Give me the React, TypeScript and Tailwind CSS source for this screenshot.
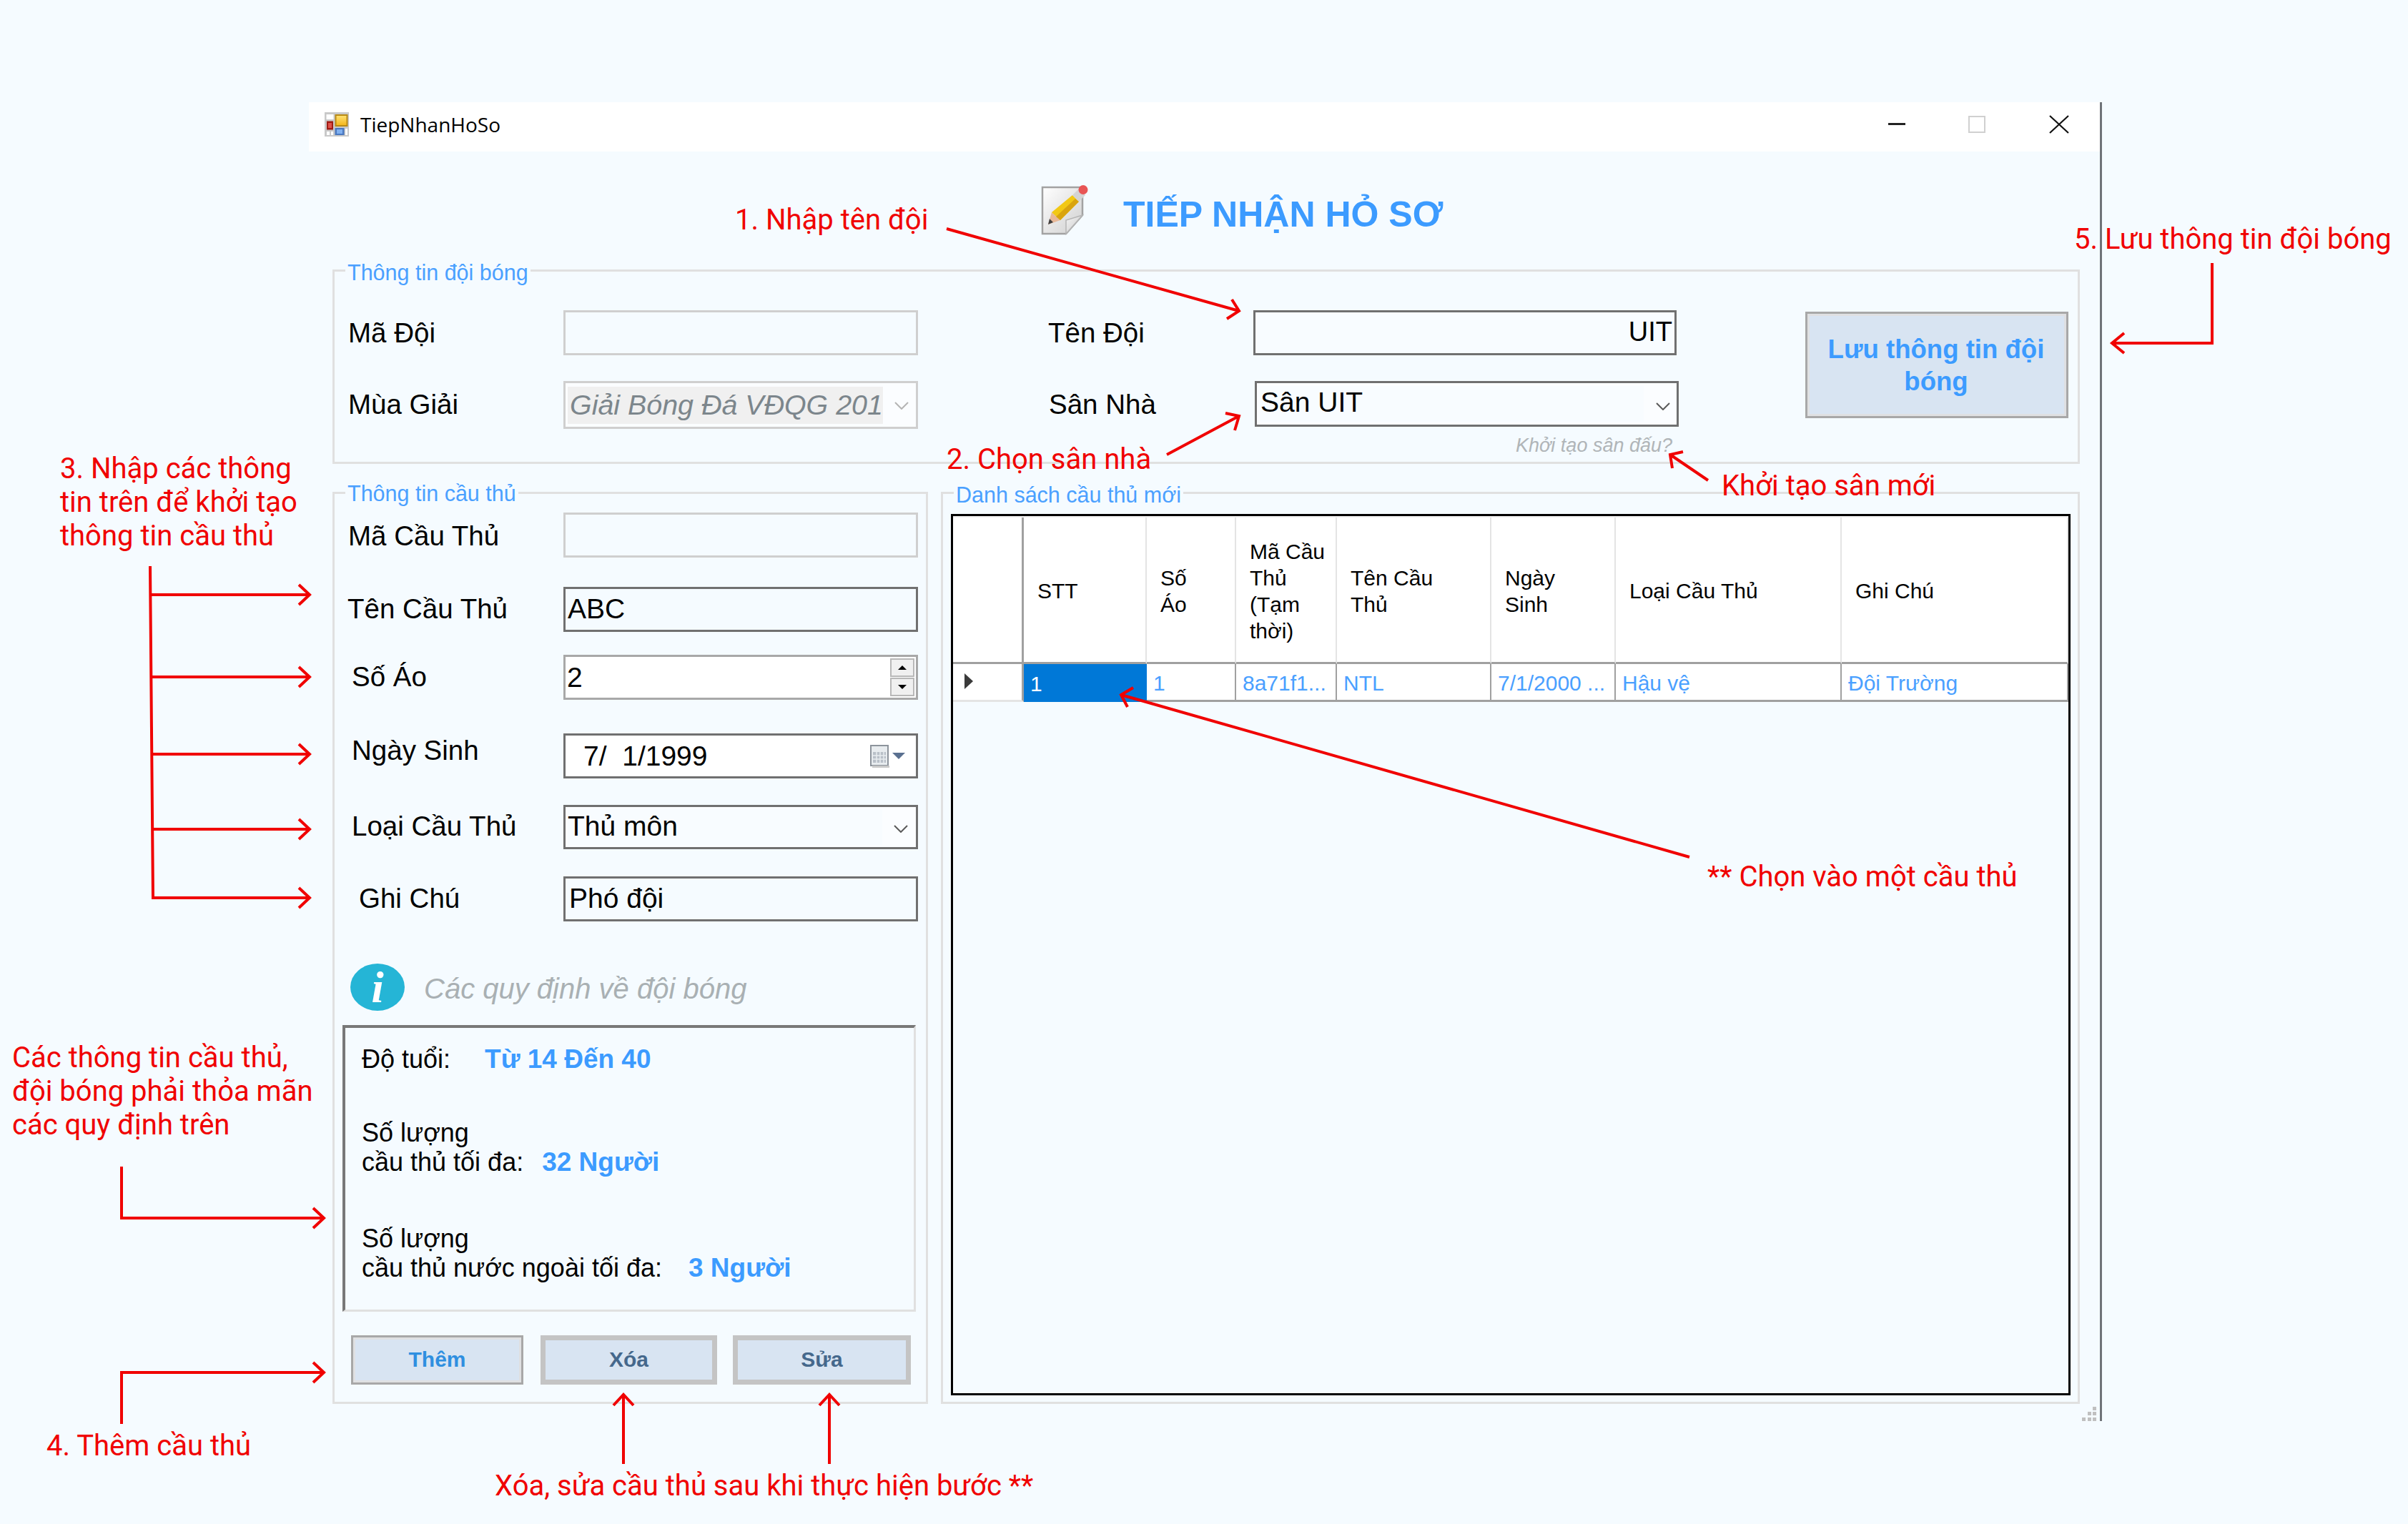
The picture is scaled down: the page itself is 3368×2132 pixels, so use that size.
import React from "react";

const BLUE = "text-[#3c9bff]";

const Chevron = ({ color = "#5a5a5a" }: { color?: string }) => (
	<svg width="20" height="11" viewBox="0 0 20 11" fill="none">
		<path d="M1 1L10 10L19 1" stroke={color} strokeWidth="2" />
	</svg>
);

const WindowIcon = () => (
	<svg width="34" height="34" viewBox="0 0 34 34" className="shrink-0">
		<defs>
			<linearGradient id="yel" x1="0" y1="0" x2="0" y2="1">
				<stop offset="0" stopColor="#ffe070" />
				<stop offset="1" stopColor="#f5b81e" />
			</linearGradient>
		</defs>
		<rect width="34" height="34" fill="#c9c9c9" />
		<rect x="2.5" y="3" width="10" height="7" fill="#fff" />
		<rect x="14.5" y="3" width="18" height="17" fill="#b98a14" />
		<rect x="16.5" y="5" width="14" height="13" fill="url(#yel)" />
		<rect x="3" y="12.5" width="9" height="12" fill="#a01c14" />
		<rect x="5" y="15" width="5" height="7" fill="#e0524a" />
		<rect x="14.5" y="22" width="13" height="10" fill="#4a78c0" />
		<rect x="17" y="24" width="8" height="6" fill="#80b0f0" />
		<rect x="3" y="27" width="4" height="5" fill="#fff" />
		<rect x="9" y="27" width="3" height="5" fill="#fff" />
		<rect x="29" y="23" width="3" height="9" fill="#fff" />
	</svg>
);

const PencilIcon = () => (
	<svg width="66" height="72" viewBox="16 8 66 72" className="shrink-0">
		<defs>
			<linearGradient id="page" x1="0" y1="0" x2="1" y2="1">
				<stop offset="0" stopColor="#ffffff" />
				<stop offset="1" stopColor="#cfcfcf" />
			</linearGradient>
			<linearGradient id="fold" x1="0" y1="0" x2="1" y2="1">
				<stop offset="0" stopColor="#f4f4f4" />
				<stop offset="1" stopColor="#c8c8c8" />
			</linearGradient>
		</defs>
		<path d="M18 11H74V50L51 76H18Z" fill="url(#page)" stroke="#a2a2a2" strokeWidth="2.5" />
		<path d="M51 76V57L74 50Z" fill="url(#fold)" stroke="#b5b5b5" strokeWidth="1.5" />
		<path d="M26 63L31 46L43 57Z" fill="#e8b898" />
		<path d="M26 63L28 55L33 60Z" fill="#404040" />
		<path d="M31 46L60 22L69 31L43 57Z" fill="#f2c814" />
		<path d="M37 52L64 27L69 31L43 57Z" fill="#d9a40e" />
		<path d="M60 22L69 13L78 22L69 31Z" fill="#d4d4d4" />
		<circle cx="75" cy="14.5" r="6.5" fill="#e85555" />
	</svg>
);

const CalendarIcon = () => (
	<svg width="50" height="32" viewBox="0 0 50 32" className="shrink-0">
		<rect x="1" y="1" width="24" height="28" fill="#e8ecef" stroke="#8d949c" strokeWidth="2" />
		<rect x="4" y="10" width="18" height="15" fill="#b9c0c8" />
		<path d="M4 15H22M4 20H22M9 10V25M14 10V25M19 10V25" stroke="#e8ecef" strokeWidth="1.5" />
		<rect x="3" y="29" width="24" height="3" fill="#c8c8c8" />
		<path d="M31 11H49L40 20Z" fill="#5a7090" />
	</svg>
);

const Label = ({ children, className = "" }: { children: React.ReactNode; className?: string }) => (
	<span className={`text-[38.5px] leading-none text-black whitespace-nowrap ${className}`}>{children}</span>
);

const Legend = ({ children, className = "-top-[19px]" }: { children: React.ReactNode; className?: string }) => (
	<span className={`absolute left-[15px] bg-[#f5fbff] px-[3px] text-[30.5px] leading-[36px] text-[#4aa0ff] whitespace-nowrap ${className}`}>
		{children}
	</span>
);

const Combo = ({ value }: { value: string }) => (
	<div className="flex h-[62px] w-[496px] items-center border-[3px] border-[#707070] bg-[#fbfdff]">
		<div className="ml-[3px] flex h-[50px] w-[440px] items-center bg-[#f8fcff] pb-[3px] text-[39px] leading-none">{value}</div>
		<div className="flex flex-1 justify-center pl-[4px] pt-[4px]">
			<Chevron />
		</div>
	</div>
);

const Field = ({ children, tone = "dark", className = "" }: { children?: React.ReactNode; tone?: "dark" | "mid" | "light"; className?: string }) => {
	const border = tone === "dark" ? "border-[#707070]" : tone === "mid" ? "border-[#a8a8a8]" : "border-[#cfcfcf]";
	return <div className={`flex h-[63px] w-[496px] items-center border-[3px] ${border} ${className}`}>{children}</div>;
};

const columns = "grid grid-cols-[99px_172px_125px_141px_216px_174px_316px_317px]";

const headers = [
	"",
	"STT",
	<>Số<br />Áo</>,
	<>Mã Cầu<br />Thủ<br />(Tạm<br />thời)</>,
	<>Tên Cầu<br />Thủ</>,
	<>Ngày<br />Sinh</>,
	"Loại Cầu Thủ",
	"Ghi Chú",
];

const row = ["1", "8a71f1...", "NTL", "7/1/2000 ...", "Hậu vệ", "Đội Trường"];

const Annotations = () => (
	<>
		<svg width="3368" height="2132" viewBox="0 0 3368 2132" fill="none" stroke="#f00000" strokeWidth="4" className="pointer-events-none absolute left-0 top-0">
			<path d="M1324 320L1733 435M1723 419L1733 435L1716 446" />
			<path d="M1632 636L1733 582M1714 578L1733 582L1727 602" />
			<path d="M2389 672L2336 636M2354 632L2336 636L2339 655" />
			<path d="M3094 368V480H2954M2971 466L2954 480L2971 494" />
			<path d="M210 792L214 1256H433M211 832H433M212 947H433M213 1055H433M214 1160H433" />
			<path d="M418 818L433 832L418 846M418 933L433 947L418 961M418 1041L433 1055L418 1069M418 1146L433 1160L418 1174M418 1242L433 1256L418 1270" />
			<path d="M170 1632V1704H453M438 1690L453 1704L438 1718" />
			<path d="M170 1992V1920H453M438 1906L453 1920L438 1934" />
			<path d="M872 2048V1951M858 1966L872 1951L886 1966" />
			<path d="M1160 2048V1951M1146 1966L1160 1951L1174 1966" />
			<path d="M2363 1199L1568 972M1585 962L1568 972L1577 989" />
		</svg>
		<div className="pointer-events-none font-['Roboto',sans-serif] text-[40px] leading-[47px] text-[#f00000] whitespace-nowrap">
			<div className="absolute left-[1028px] top-[284px]">1. Nhập tên đội</div>
			<div className="absolute left-[1324px] top-[619px]">2. Chọn sân nhà</div>
			<div className="absolute left-[2408px] top-[656px]">Khởi tạo sân mới</div>
			<div className="absolute left-[2901px] top-[311px]">5. Lưu thông tin đội bóng</div>
			<div className="absolute left-[84px] top-[632px]">
				3. Nhập các thông<br />tin trên để khởi tạo<br />thông tin cầu thủ
			</div>
			<div className="absolute left-[17px] top-[1456px]">
				Các thông tin cầu thủ,<br />đội bóng phải thỏa mãn<br />các quy định trên
			</div>
			<div className="absolute left-[65px] top-[1999px]">4. Thêm cầu thủ</div>
			<div className="absolute left-[692px] top-[2055px]">Xóa, sửa cầu thủ sau khi thực hiện bước **</div>
			<div className="absolute left-[2388px] top-[1203px]">** Chọn vào một cầu thủ</div>
		</div>
	</>
);

export default function App() {
	return (
		<div className="relative h-[2132px] w-[3368px] overflow-hidden bg-[#f5fbff] pl-[432px] pt-[143px] font-['Liberation_Sans',sans-serif] text-black">
			<div className="relative h-[1845px] w-[2508px] border-r-[3px] border-[#6f7378]">
				{/* title bar */}
				<div className="flex h-[69px] items-center bg-white pb-[8px] pl-[22px]">
					<WindowIcon />
					<span className="ml-[16px] font-['Open_Sans',sans-serif] text-[28px] leading-none">TiepNhanHoSo</span>
					<div className="ml-auto flex items-center">
						<div className="h-[3px] w-[24px] bg-[#222]" />
						<div className="ml-[88px] h-[24px] w-[24px] border-2 border-[#d0d0d0]" />
						<svg width="28" height="26" viewBox="0 0 28 26" className="ml-[89px] mr-[43px]">
							<path d="M1 1L27 25M27 1L1 25" stroke="#111" strokeWidth="2.2" />
						</svg>
					</div>
				</div>

				{/* form title */}
				<div className="flex h-[165px] items-start pl-[1024px] pt-[47px]">
					<PencilIcon />
					<span className={`ml-[49px] mt-[13px] text-[50px] font-bold leading-[56px] ${BLUE}`}>TIẾP NHẬN HỎ SƠ</span>
				</div>

				{/* team box */}
				<div className="relative ml-[33px] flex h-[272px] w-[2444px] border-[3px] border-[#e0e0e0] pl-[19px] pt-[54px]">
					<Legend className="-top-[17px]">Thông tin đội bóng</Legend>
					<div className="w-[797px]">
						<div className="flex items-center">
							<Label className="w-[301px] pt-[2px]">Mã Đội</Label>
							<Field tone="light" />
						</div>
						<div className="mt-[36px] flex items-center">
							<Label className="w-[301px]">Mùa Giải</Label>
							<div className="flex h-[67px] w-[496px] items-center border-[3px] border-[#cfcfcf] bg-[#fbfdff]">
								<div className="ml-[3px] flex h-[52px] w-[441px] items-center overflow-hidden whitespace-nowrap bg-[#f0f0f0] pl-[3px] text-[39.4px] italic leading-none text-[#7c868c]">
									Giải Bóng Đá VĐQG 201
								</div>
								<div className="flex flex-1 justify-center pl-[6px] pt-[2px]">
									<Chevron color="#b4b4b4" />
								</div>
							</div>
						</div>
					</div>
					<div className="ml-[182px] w-[882px]">
						<div className="flex items-center">
							<Label className="w-[287px] pt-[2px]">Tên Đội</Label>
							<div className="flex h-[63px] w-[592px] items-center justify-end border-[3px] border-[#707070] bg-[#f8fcff] pb-[3px] pr-[3px] text-[38px] leading-none">UIT</div>
						</div>
						<div className="mt-[36px] flex items-center">
							<Label className="w-[289px] pl-[1px] pt-[2px]">Sân Nhà</Label>
							<div className="flex h-[64px] w-[593px] items-center border-[3px] border-[#707070] bg-[#fbfdff]">
								<div className="ml-[4px] flex h-[50px] w-[537px] items-center bg-[#f8fcff] pb-[6px] pl-[1px] text-[39px] leading-none">Sân UIT</div>
								<div className="flex flex-1 justify-center pl-[8px] pt-[6px]">
									<Chevron />
								</div>
							</div>
						</div>
						<div className="mt-[11px] pr-[9px] text-right text-[27px] italic leading-[30px] text-[#b0b5b8]">Khởi tạo sân đấu?</div>
					</div>
					<button className="ml-[177px] mt-[2px] flex h-[149px] w-[368px] items-center justify-center border-[3px] border-[#a8a8a8] bg-[#d8e4f2] pr-[2px] text-center text-[36.6px] font-bold leading-[45px] outline-[3px] -outline-offset-[6px] outline-[#dfe0e2] text-[#3c9bff]">
						Lưu thông tin đội<br />bóng
					</button>
				</div>

				<div className="ml-[33px] mt-[39px] flex gap-[18px]">
					{/* player box */}
					<div className="relative h-[1276px] w-[833px] border-[3px] border-[#e0e0e0] pl-[19px] pt-[26px]">
						<Legend>Thông tin cầu thủ</Legend>
						<div className="flex items-center">
							<Label className="w-[301px] pt-[4px]">Mã Cầu Thủ</Label>
							<Field tone="light" />
						</div>
						<div className="mt-[41px] flex items-center">
							<Label className="w-[301px] -ml-[1px] mr-[1px]">Tên Cầu Thủ</Label>
							<Field className="pb-[3px] pl-[3px] text-[39px] leading-none">ABC</Field>
						</div>
						<div className="mt-[32px] flex items-center">
							<Label className="w-[301px] pl-[5px]">Số Áo</Label>
							<Field tone="mid" className="bg-white pl-[2px] text-[39px] leading-none">
								<span className="flex-1">2</span>
								<div className="mr-[2px] flex w-[34px] flex-col gap-[1px]">
									<div className="flex h-[26px] items-center justify-center border-2 border-[#b8b8b8] bg-[#f0f0f0] text-[10px]">
										<span className="h-0 w-0 border-x-[6px] border-b-[6px] border-x-transparent border-b-black" />
									</div>
									<div className="flex h-[26px] items-center justify-center border-2 border-[#b8b8b8] bg-[#f0f0f0] text-[10px]">
										<span className="h-0 w-0 border-x-[6px] border-t-[6px] border-x-transparent border-t-black" />
									</div>
								</div>
							</Field>
						</div>
						<div className="mt-[47px] flex items-center">
							<Label className="-mt-[14px] w-[301px] pl-[5px]">Ngày Sinh</Label>
							<Field className="bg-white pl-[25px] text-[39px] leading-none">
								<span className="flex-1 whitespace-pre">7/  1/1999</span>
								<div className="mr-[14px]">
									<CalendarIcon />
								</div>
							</Field>
						</div>
						<div className="mt-[37px] flex items-center">
							<Label className="-mt-[2px] w-[301px] pl-[5px]">Loại Cầu Thủ</Label>
							<Combo value="Thủ môn" />
						</div>
						<div className="mt-[38px] flex items-center">
							<Label className="w-[301px] pl-[15px]">Ghi Chú</Label>
							<Field className="pb-[2px] pl-[5px] text-[39px] leading-none">Phó đội</Field>
						</div>

						<div className="ml-[3px] mt-[59px] flex items-center">
							<div className="flex h-[66px] w-[76px] items-center justify-center rounded-[50%] bg-[#25b5d6] font-['Liberation_Serif',serif] text-[62px] font-bold italic leading-none text-white">
								i
							</div>
							<span className="ml-[27px] pt-[3px] text-[40px] italic leading-none text-[#a9b0b3]">Các quy định về đội bóng</span>
						</div>

						{/* rules */}
						<div className="-ml-[8px] mt-[20px] h-[401px] w-[802px] border-b-[3px] border-l-[4px] border-r-[3px] border-t-[4px] border-b-[#e0e0e0] border-l-[#787878] border-r-[#e0e0e0] border-t-[#787878] pl-[23px] pt-[23px] text-[36px] leading-[41px]">
							<div className="flex items-baseline">
								<span>Độ tuổi:</span>
								<span className={`ml-[48px] text-[37px] font-bold ${BLUE}`}>Từ 14 Đến 40</span>
							</div>
							<div className="mt-[62px]">Số lượng</div>
							<div className="flex items-baseline">
								<span>cầu thủ tối đa:</span>
								<span className={`ml-[26px] text-[37px] font-bold ${BLUE}`}>32 Người</span>
							</div>
							<div className="mt-[66px]">Số lượng</div>
							<div className="flex items-baseline">
								<span>cầu thủ nước ngoài tối đa:</span>
								<span className={`ml-[37px] text-[37px] font-bold ${BLUE}`}>3 Người</span>
							</div>
						</div>

						{/* actions */}
						<div className="ml-[4px] mt-[33px] flex h-[69px] text-[30px] font-bold">
							<button className="h-full w-[241px] border-[3px] border-[#a8a8a8] bg-[#d8e4f2] pb-[3px] text-[#2f8fe0] outline-[3px] -outline-offset-[6px] outline-[#dfe0e2]">Thêm</button>
							<button className="ml-[24px] h-full w-[247px] border-[7px] border-[#c4c4c4] bg-[#d8e4f2] pb-[3px] text-[#45688c]">Xóa</button>
							<button className="ml-[22px] h-full w-[249px] border-[7px] border-[#c4c4c4] bg-[#d8e4f2] pb-[3px] text-[#45688c]">Sửa</button>
						</div>
					</div>

					{/* players list */}
					<div className="relative h-[1276px] w-[1593px] border-[3px] border-[#e0e0e0] pl-[11px] pt-[28px]">
						<Legend className="-top-[17px]">Danh sách cầu thủ mới</Legend>
						<div className="h-[1233px] w-[1566px] border-[3px] border-black">
							<div className={`${columns} h-[207px] border-t-2 border-[#f0f0f0] bg-white text-[30px] leading-[37px]`}>
								{headers.map((h, i) => (
									<div
										key={i}
										className={`flex items-center border-b-[3px] border-b-[#a0a0a0] pl-[19px] pt-[3px] ${i === 0 ? "border-r-[3px] border-r-[#a0a0a0]" : "border-r-2 border-r-[#e4e4e4]"}`}
									>
										<div>{h}</div>
									</div>
								))}
							</div>
							<div className={`${columns} h-[53px] text-[30px] leading-none text-[#4aa0ff]`}>
								<div className="flex items-center border-b-[3px] border-r-[3px] border-b-[#e4e4e4] border-r-[#a0a0a0] bg-white pb-[2px] pl-[16px]">
									<span className="h-0 w-0 border-y-[11px] border-l-[12px] border-y-transparent border-l-[#3a3a3a]" />
								</div>
								<div className="flex items-center bg-[#0078d7] pl-[9px] pt-[3px] text-white">1</div>
								{row.map((v, i) => (
									<div key={i} className="flex items-center whitespace-nowrap border-b-[3px] border-r-2 border-[#a0a0a0] bg-white pl-[9px] pt-[3px]">
										{v}
									</div>
								))}
							</div>
						</div>
					</div>
				</div>

				{/* resize grip */}
				<svg width="20" height="20" viewBox="0 0 20 20" fill="#c0c0c0" className="absolute bottom-0 right-[5px]">
					<rect x="15" y="0" width="5" height="5" />
					<rect x="8" y="7" width="5" height="5" />
					<rect x="15" y="7" width="5" height="5" />
					<rect x="0" y="15" width="5" height="5" />
					<rect x="8" y="15" width="5" height="5" />
					<rect x="15" y="15" width="5" height="5" />
				</svg>
			</div>
			<Annotations />
		</div>
	);
}
